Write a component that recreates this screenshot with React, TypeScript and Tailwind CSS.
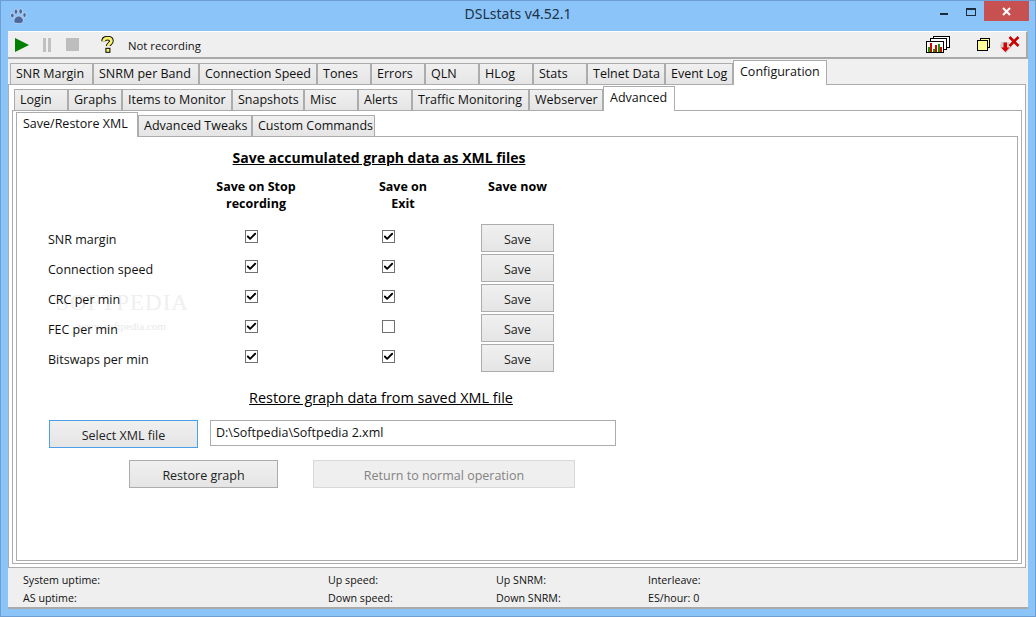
import { Check } from 'lucide-react';

const mainTabs = [
  { label: 'SNR Margin', width: 'w-[83px]' },
  { label: 'SNRM per Band', width: 'w-[106px]' },
  { label: 'Connection Speed', width: 'w-[118px]' },
  { label: 'Tones', width: 'w-[54px]' },
  { label: 'Errors', width: 'w-[54px]' },
  { label: 'QLN', width: 'w-[54px]' },
  { label: 'HLog', width: 'w-[54px]' },
  { label: 'Stats', width: 'w-[54px]' },
  { label: 'Telnet Data', width: 'w-[78px]' },
  { label: 'Event Log', width: 'w-[68px]' },
  { label: 'Configuration', width: 'w-[94px]', active: true },
];

const configTabs = [
  { label: 'Login', width: 'w-[54px]' },
  { label: 'Graphs', width: 'w-[54px]' },
  { label: 'Items to Monitor', width: 'w-[110px]' },
  { label: 'Snapshots', width: 'w-[72px]' },
  { label: 'Misc', width: 'w-[54px]' },
  { label: 'Alerts', width: 'w-[54px]' },
  { label: 'Traffic Monitoring', width: 'w-[117px]' },
  { label: 'Webserver', width: 'w-[74px]' },
  { label: 'Advanced', width: 'w-[72px]', active: true },
];

const advancedTabs = [
  { label: 'Save/Restore XML', width: 'w-[122px]', active: true },
  { label: 'Advanced Tweaks', width: 'w-[114px]' },
  { label: 'Custom Commands', width: 'w-[123px]' },
];

const graphRows = [
  { label: 'SNR margin', stop: true, exit: true },
  { label: 'Connection speed', stop: true, exit: true },
  { label: 'CRC per min', stop: true, exit: true },
  { label: 'FEC per min', stop: true, exit: false },
  { label: 'Bitswaps per min', stop: true, exit: true },
];

type TabItem = { label: string; width: string; active?: boolean };

function TabRow({ tabs, className }: { tabs: TabItem[]; className: string }) {
  return (
    <div className={`relative z-10 flex h-[25px] -mb-px items-end ${className}`}>
      {tabs.map((tab) =>
        tab.active ? (
          <div
            key={tab.label}
            className={`${tab.width} h-[25px] border border-b-0 border-[#acacac] bg-white pl-[6px] pt-[2px] text-[12.5px] leading-[17px] text-[#111]`}
          >
            {tab.label}
          </div>
        ) : (
          <div
            key={tab.label}
            className={`${tab.width} h-[22px] border border-[#acacac] bg-gradient-to-b from-[#f0f0f0] to-[#e5e5e5] pl-[5px] pt-[1px] text-[12.5px] leading-[17px] text-[#111] whitespace-nowrap overflow-hidden`}
          >
            {tab.label}
          </div>
        )
      )}
    </div>
  );
}

function Checkbox({ checked }: { checked: boolean }) {
  return (
    <div className="mb-[3px] flex h-[13px] w-[13px] items-center justify-center border border-[#707070] bg-white">
      {checked && <Check className="h-[11px] w-[11px] text-black" strokeWidth={4} />}
    </div>
  );
}

function PushButton({ label, className }: { label: string; className: string }) {
  return (
    <div
      className={`flex h-[28px] items-center justify-center border bg-gradient-to-b from-[#f0f0f0] to-[#e5e5e5] pt-[4px] text-[12.5px] text-[#222] ${className}`}
    >
      {label}
    </div>
  );
}

function PawIcon() {
  return (
    <svg width="17" height="16" viewBox="0 0 16 15" className="ml-[9px]">
      <g fill="#4d689c" stroke="#dbe8f7" strokeWidth="0.6">
        <ellipse cx="2.2" cy="7" rx="1.7" ry="2.2" />
        <ellipse cx="5.6" cy="3.4" rx="1.7" ry="2.5" />
        <ellipse cx="10" cy="3.2" rx="1.7" ry="2.5" />
        <ellipse cx="13.7" cy="6.6" rx="1.6" ry="2.2" />
        <path d="M3.6 12.5c0-3 2.4-5 4.6-5s4.4 2 4.4 4.6c0 2-2 2.4-4.4 2.4-2.6 0-4.6-.2-4.6-2z" />
      </g>
    </svg>
  );
}

function HelpIcon() {
  return (
    <svg width="15" height="17" viewBox="0 0 15 17">
      <path
        d="M3.600 5.200C3.600 3 5.400 2.200 7.500 2.200c2.400 0 3.900 1 3.900 2.900 0 2.600-3.200 2.600-3.200 5"
        fill="none"
        stroke="#000"
        strokeWidth="4.600"
      />
      <rect x="5.400" y="11.800" width="5" height="5" fill="#000" />
      <path
        d="M3.600 5.200C3.600 3 5.400 2.200 7.500 2.200c2.400 0 3.900 1 3.900 2.900 0 2.600-3.200 2.600-3.200 5"
        fill="none"
        stroke="#f8f06a"
        strokeWidth="2.800"
      />
      <rect x="6.400" y="12.800" width="3" height="3" fill="#f8f06a" />
    </svg>
  );
}

function ChartsIcon() {
  return (
    <svg width="25" height="17" viewBox="0 0 25 17">
      <rect x="7.5" y="0.5" width="16" height="11" fill="#fff" stroke="#000" />
      <rect x="4.5" y="2.5" width="16" height="11" fill="#fff" stroke="#000" />
      <rect x="0.5" y="5.5" width="17" height="11" fill="#fff" stroke="#000" />
      <rect x="2" y="11" width="2" height="5" fill="#0a9a0a" />
      <rect x="4" y="7" width="2" height="9" fill="#e00000" />
      <rect x="7" y="13" width="2" height="3" fill="#0a9a0a" />
      <rect x="9" y="9" width="2" height="7" fill="#e00000" />
      <rect x="12" y="8" width="2" height="8" fill="#0a9a0a" />
      <rect x="14" y="11" width="2" height="5" fill="#e00000" />
    </svg>
  );
}

function WindowsIcon() {
  return (
    <svg width="13" height="13" viewBox="0 0 13 13">
      <rect x="3.5" y="0.5" width="9" height="9" fill="#ffff99" stroke="#000" />
      <rect x="0.5" y="2.5" width="10" height="10" fill="#ffff99" stroke="#000" />
    </svg>
  );
}

function ExitIcon() {
  return (
    <svg width="20" height="17" viewBox="0 0 20 17">
      <path d="M1 6h8v5h3l-6 6-6-6z" fill="#cfcfcf" />
      <path d="M3.500 6.500h3.500v5h2.500l-4.200 4.500-4.300-4.500h2.500z" fill="#d80000" />
      <path d="M9.500 1l9 9M18.500 1l-9 9" stroke="#c80000" strokeWidth="2.600" fill="none" />
    </svg>
  );
}

export default function App() {
  return (
    <div className="flex h-[617px] w-[1036px] flex-col overflow-hidden border border-[#6f9fd2] bg-[#8ac4f8] font-['Open_Sans','Noto_Sans',sans-serif]">
      <div className="grid h-[30px] shrink-0 grid-cols-[1fr_auto_1fr] items-start">
        <div className="pt-[7px]">
          <PawIcon />
        </div>
        <div className="pt-[3px] text-[14px] leading-[20px] text-[#1c3248] font-['Noto_Sans','Open_Sans',sans-serif]">DSLstats v4.52.1</div>
        <div className="flex items-start justify-end pr-[6px]">
          <div className="mt-[12px] h-[2px] w-[8px] bg-[#1c2c3c]" />
          <div className="ml-[18px] mt-[7px] h-[8px] w-[10px] border border-t-2 border-[#1c2c3c]" />
          <div className="ml-[8px] flex h-[20px] w-[45px] items-center justify-center bg-[#c75050]">
            <svg width="9" height="9" viewBox="0 0 9 9">
              <path d="M1 1l7 7M8 1L1 8" stroke="#fff" strokeWidth="2" />
            </svg>
          </div>
        </div>
      </div>

      <div className="ml-[7px] flex h-[578px] w-[1020px] flex-col bg-[#f0f0f0]">
        <div className="flex h-[28px] shrink-0 items-center border-t border-b-2 border-r-2 border-t-white border-b-[#a9a9a9] border-r-[#a9a9a9] bg-[#efefef]">
          <svg width="14" height="14" viewBox="0 0 14 14" className="ml-[7px]">
            <path d="M0 0l14 7-14 7z" fill="#008000" />
          </svg>
          <div className="ml-[14px] flex gap-[2px]">
            <div className="h-[14px] w-[3px] bg-[#c0c0c0]" />
            <div className="h-[14px] w-[3px] bg-[#c0c0c0]" />
          </div>
          <div className="ml-[15px] h-[13px] w-[13px] bg-[#bdbdbd]" />
          <div className="ml-[21px]">
            <HelpIcon />
          </div>
          <div className="ml-[13px] mt-[4px] text-[11.3px] text-[#111]">Not recording</div>
          <div className="ml-auto flex items-center">
            <ChartsIcon />
            <div className="ml-[26px]">
              <WindowsIcon />
            </div>
            <div className="ml-[10px] mr-[6px]">
              <ExitIcon />
            </div>
          </div>
        </div>

        <TabRow tabs={mainTabs} className="mt-px ml-[2px]" />
        <div className="mr-[2px] flex flex-1 flex-col border border-[#acacac] bg-white">
          <div className="pt-px">
            <TabRow tabs={configTabs} className="ml-[5px]" />
          </div>
          <div className="mx-[3px] mb-[3px] flex flex-1 flex-col border border-[#acacac] bg-white">
            <div className="pt-px">
              <TabRow tabs={advancedTabs} className="ml-[3px]" />
            </div>
            <div className="relative mx-[3px] mb-[2px] flex-1 border border-[#acacac] bg-white text-[12.5px] text-[#111]">
              <div className="pointer-events-none absolute left-[39px] top-[153px] select-none font-['Liberation_Serif',serif] text-[23px] leading-[26px] tracking-[1px] text-[#efefef]">
                SOFTPEDIA
              </div>
              <div className="pointer-events-none absolute left-[61px] top-[182px] select-none font-['Liberation_Serif',serif] text-[11px] leading-[14px] text-[#e8e8e8]">
                www.softpedia.com
              </div>

              <div className="relative">
                <div className="w-[724px] pt-[11px] text-center text-[14px] font-bold leading-[20px] text-black underline">
                  Save accumulated graph data as XML files
                </div>

                <div className="mt-[10px] flex text-center text-[12.5px] font-bold leading-[17px] text-black">
                  <div className="ml-[179px] w-[120px]">Save on Stop recording</div>
                  <div className="ml-[57px] w-[60px]">Save on Exit</div>
                  <div className="ml-[48px] w-[73px]">Save now</div>
                </div>

                <div className="mt-[12px] flex flex-col gap-[2px] pl-[31px]">
                  {graphRows.map((row) => (
                    <div key={row.label} className="grid h-[28px] grid-cols-[197px_137px_99px_73px] items-center">
                      <div className="mt-[4px]">{row.label}</div>
                      <Checkbox checked={row.stop} />
                      <Checkbox checked={row.exit} />
                      <PushButton label="Save" className="border-[#acacac]" />
                    </div>
                  ))}
                </div>

                <div className="mt-[16px] w-[728px] text-center text-[14.4px] leading-[20px] text-black underline">
                  Restore graph data from saved XML file
                </div>

                <div className="mt-[12px] flex items-start pl-[32px]">
                  <PushButton label="Select XML file" className="w-[149px] border-[#4b9fea]" />
                  <div className="ml-[12px] flex h-[26px] w-[406px] items-center border border-[#acacac] bg-white pl-[5px]">
                    D:\Softpedia\Softpedia 2.xml
                  </div>
                </div>

                <div className="mt-[12px] flex pl-[112px]">
                  <PushButton label="Restore graph" className="w-[149px] border-[#acacac]" />
                  <div className="ml-[35px] flex h-[28px] w-[262px] items-center justify-center border border-[#d9d9d9] bg-[#efefef] pt-[4px] text-[#838383]">
                    Return to normal operation
                  </div>
                </div>
              </div>
            </div>
          </div>
        </div>

        <div className="grid h-[41px] shrink-0 grid-cols-[305px_168px_152px_1fr] border-b-2 border-[#a9a9a9] bg-[#efefef] pl-[15px] pt-[3px] text-[10.7px] leading-[18px] text-[#111]">
          <div>System uptime:</div>
          <div>Up speed:</div>
          <div>Up SNRM:</div>
          <div>Interleave:</div>
          <div>AS uptime:</div>
          <div>Down speed:</div>
          <div>Down SNRM:</div>
          <div>ES/hour: 0</div>
        </div>
      </div>
    </div>
  );
}
